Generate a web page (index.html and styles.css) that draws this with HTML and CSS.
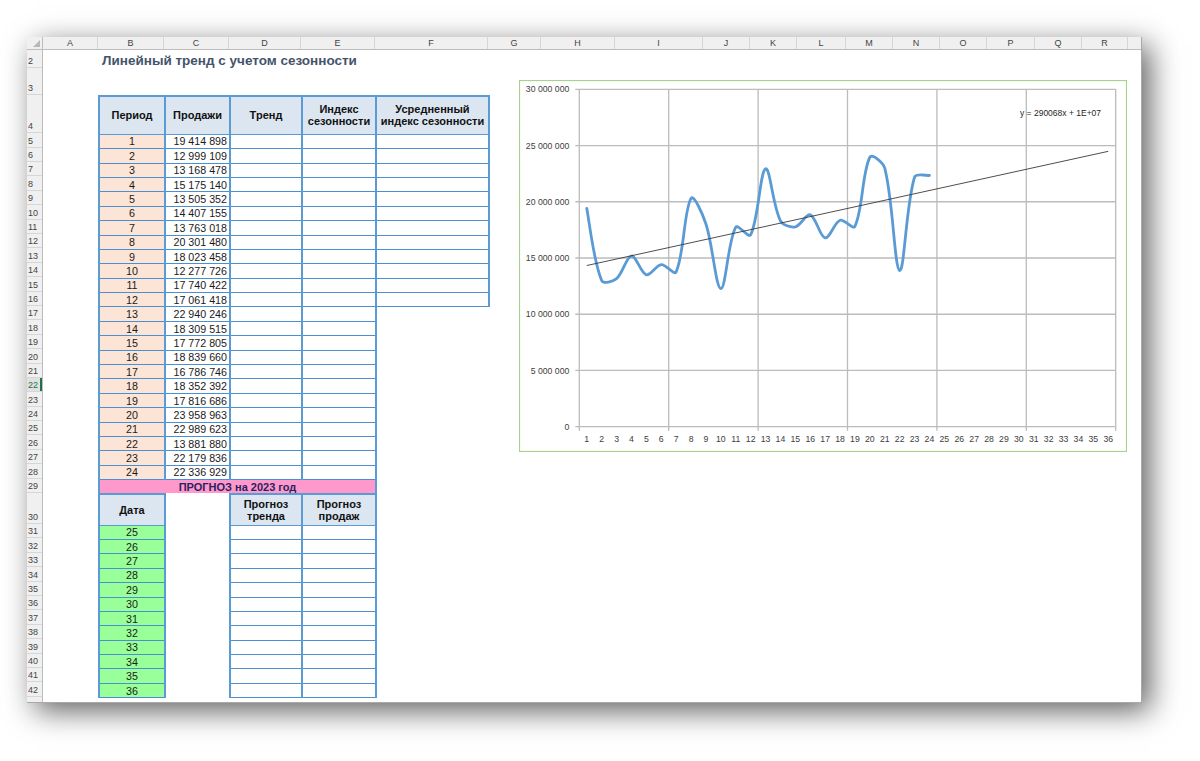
FILE: index.html
```html
<!DOCTYPE html>
<html lang="ru">
<head>
<meta charset="utf-8">
<title>Линейный тренд с учетом сезонности</title>
<link rel="stylesheet" href="styles.css">
</head>
<body>
<div class="sheet">
  <div class="corner"><span class="tri"></span></div>
  <div class="colheads">
    <div class="ch wa">A</div><div class="ch wb">B</div><div class="ch wc">C</div><div class="ch wd">D</div><div class="ch we">E</div><div class="ch wf">F</div><div class="ch wg">G</div><div class="ch wh">H</div><div class="ch wi">I</div><div class="ch wj">J</div><div class="ch wk">K</div><div class="ch wl">L</div><div class="ch wm">M</div><div class="ch wn">N</div><div class="ch wo">O</div><div class="ch wp">P</div><div class="ch wq">Q</div><div class="ch wr">R</div><div class="ch wrest"></div>
  </div>
  <div class="rowheads">
    <div class="rh h2">2</div><div class="rh h3">3</div><div class="rh h4">4</div>
    <div class="rh">5</div><div class="rh">6</div><div class="rh">7</div><div class="rh">8</div><div class="rh">9</div><div class="rh">10</div><div class="rh">11</div><div class="rh">12</div><div class="rh">13</div><div class="rh">14</div><div class="rh">15</div><div class="rh">16</div><div class="rh">17</div><div class="rh">18</div><div class="rh">19</div><div class="rh">20</div><div class="rh">21</div><div class="rh act">22</div><div class="rh">23</div><div class="rh">24</div><div class="rh">25</div><div class="rh">26</div><div class="rh">27</div><div class="rh">28</div><div class="rh">29</div>
    <div class="rh h30">30</div>
    <div class="rh">31</div><div class="rh">32</div><div class="rh">33</div><div class="rh">34</div><div class="rh">35</div><div class="rh">36</div><div class="rh">37</div><div class="rh">38</div><div class="rh">39</div><div class="rh">40</div><div class="rh">41</div><div class="rh">42</div>
    <div class="rh h43"></div>
  </div>

  <div class="title">Линейный тренд с учетом сезонности</div>

  <table class="data">
    <colgroup><col class="cb"><col class="cc"><col class="cd"><col class="ce"><col class="cf"></colgroup>
    <tr class="hrow"><th class="hd">Период</th><th class="hd">Продажи</th><th class="hd">Тренд</th><th class="hd">Индекс<br>сезонности</th><th class="hd">Усредненный<br>индекс сезонности</th></tr>
    <tr class="r"><td class="bx per">1</td><td class="bx val">19 414 898</td><td class="bx"></td><td class="bx"></td><td class="bx"></td></tr>
    <tr class="r"><td class="bx per">2</td><td class="bx val">12 999 109</td><td class="bx"></td><td class="bx"></td><td class="bx"></td></tr>
    <tr class="r"><td class="bx per">3</td><td class="bx val">13 168 478</td><td class="bx"></td><td class="bx"></td><td class="bx"></td></tr>
    <tr class="r"><td class="bx per">4</td><td class="bx val">15 175 140</td><td class="bx"></td><td class="bx"></td><td class="bx"></td></tr>
    <tr class="r"><td class="bx per">5</td><td class="bx val">13 505 352</td><td class="bx"></td><td class="bx"></td><td class="bx"></td></tr>
    <tr class="r"><td class="bx per">6</td><td class="bx val">14 407 155</td><td class="bx"></td><td class="bx"></td><td class="bx"></td></tr>
    <tr class="r"><td class="bx per">7</td><td class="bx val">13 763 018</td><td class="bx"></td><td class="bx"></td><td class="bx"></td></tr>
    <tr class="r"><td class="bx per">8</td><td class="bx val">20 301 480</td><td class="bx"></td><td class="bx"></td><td class="bx"></td></tr>
    <tr class="r"><td class="bx per">9</td><td class="bx val">18 023 458</td><td class="bx"></td><td class="bx"></td><td class="bx"></td></tr>
    <tr class="r"><td class="bx per">10</td><td class="bx val">12 277 726</td><td class="bx"></td><td class="bx"></td><td class="bx"></td></tr>
    <tr class="r"><td class="bx per">11</td><td class="bx val">17 740 422</td><td class="bx"></td><td class="bx"></td><td class="bx"></td></tr>
    <tr class="r"><td class="bx per">12</td><td class="bx val">17 061 418</td><td class="bx"></td><td class="bx"></td><td class="bx"></td></tr>
    <tr class="r"><td class="bx per">13</td><td class="bx val">22 940 246</td><td class="bx"></td><td class="bx"></td><td class="nb"></td></tr>
    <tr class="r"><td class="bx per">14</td><td class="bx val">18 309 515</td><td class="bx"></td><td class="bx"></td><td class="nb"></td></tr>
    <tr class="r"><td class="bx per">15</td><td class="bx val">17 772 805</td><td class="bx"></td><td class="bx"></td><td class="nb"></td></tr>
    <tr class="r"><td class="bx per">16</td><td class="bx val">18 839 660</td><td class="bx"></td><td class="bx"></td><td class="nb"></td></tr>
    <tr class="r"><td class="bx per">17</td><td class="bx val">16 786 746</td><td class="bx"></td><td class="bx"></td><td class="nb"></td></tr>
    <tr class="r"><td class="bx per">18</td><td class="bx val">18 352 392</td><td class="bx"></td><td class="bx"></td><td class="nb"></td></tr>
    <tr class="r"><td class="bx per">19</td><td class="bx val">17 816 686</td><td class="bx"></td><td class="bx"></td><td class="nb"></td></tr>
    <tr class="r"><td class="bx per">20</td><td class="bx val">23 958 963</td><td class="bx"></td><td class="bx"></td><td class="nb"></td></tr>
    <tr class="r"><td class="bx per">21</td><td class="bx val">22 989 623</td><td class="bx"></td><td class="bx"></td><td class="nb"></td></tr>
    <tr class="r"><td class="bx per">22</td><td class="bx val">13 881 880</td><td class="bx"></td><td class="bx"></td><td class="nb"></td></tr>
    <tr class="r"><td class="bx per">23</td><td class="bx val">22 179 836</td><td class="bx"></td><td class="bx"></td><td class="nb"></td></tr>
    <tr class="r"><td class="bx per">24</td><td class="bx val">22 336 929</td><td class="bx"></td><td class="bx"></td><td class="nb"></td></tr>
    <tr class="r"><td class="pink" colspan="4">ПРОГНОЗ на 2023 год</td><td class="nb"></td></tr>
    <tr class="r30"><th class="hd">Дата</th><td class="nb"></td><th class="hd">Прогноз<br>тренда</th><th class="hd">Прогноз<br>продаж</th><td class="nb"></td></tr>
    <tr class="r"><td class="bx grn">25</td><td class="nb"></td><td class="bx"></td><td class="bx"></td><td class="nb"></td></tr>
    <tr class="r"><td class="bx grn">26</td><td class="nb"></td><td class="bx"></td><td class="bx"></td><td class="nb"></td></tr>
    <tr class="r"><td class="bx grn">27</td><td class="nb"></td><td class="bx"></td><td class="bx"></td><td class="nb"></td></tr>
    <tr class="r"><td class="bx grn">28</td><td class="nb"></td><td class="bx"></td><td class="bx"></td><td class="nb"></td></tr>
    <tr class="r"><td class="bx grn">29</td><td class="nb"></td><td class="bx"></td><td class="bx"></td><td class="nb"></td></tr>
    <tr class="r"><td class="bx grn">30</td><td class="nb"></td><td class="bx"></td><td class="bx"></td><td class="nb"></td></tr>
    <tr class="r"><td class="bx grn">31</td><td class="nb"></td><td class="bx"></td><td class="bx"></td><td class="nb"></td></tr>
    <tr class="r"><td class="bx grn">32</td><td class="nb"></td><td class="bx"></td><td class="bx"></td><td class="nb"></td></tr>
    <tr class="r"><td class="bx grn">33</td><td class="nb"></td><td class="bx"></td><td class="bx"></td><td class="nb"></td></tr>
    <tr class="r"><td class="bx grn">34</td><td class="nb"></td><td class="bx"></td><td class="bx"></td><td class="nb"></td></tr>
    <tr class="r"><td class="bx grn">35</td><td class="nb"></td><td class="bx"></td><td class="bx"></td><td class="nb"></td></tr>
    <tr class="r"><td class="bx grn">36</td><td class="nb"></td><td class="bx"></td><td class="bx"></td><td class="nb"></td></tr>
  </table>

  <div class="chart">
    <svg class="plot" width="608" height="372" viewBox="0 0 608 372">
      <rect class="frame" x="0.5" y="0.5" width="607" height="371"/>
      <path class="grid" d="M60.3,9.3H596.7M60.3,65.53H596.7M60.3,121.77H596.7M60.3,178H596.7M60.3,234.23H596.7M60.3,290.47H596.7M60.3,346.7H596.7M60.3,9.3V346.7M149.7,9.3V346.7M239.1,9.3V346.7M328.5,9.3V346.7M417.9,9.3V346.7M507.3,9.3V346.7M596.7,9.3V346.7"/>
      <path class="grid" d="M56.3,9.3H60.3M56.3,65.53H60.3M56.3,121.77H60.3M56.3,178H60.3M56.3,234.23H60.3M56.3,290.47H60.3M56.3,346.7H60.3M60.3,346.7V350.7M149.7,346.7V350.7M239.1,346.7V350.7M328.5,346.7V350.7M417.9,346.7V350.7M507.3,346.7V350.7M596.7,346.7V350.7"/>
      <g class="ylab">
        <text x="50.3" y="12.4">30 000 000</text>
        <text x="50.3" y="68.6">25 000 000</text>
        <text x="50.3" y="124.9">20 000 000</text>
        <text x="50.3" y="181.1">15 000 000</text>
        <text x="50.3" y="237.3">10 000 000</text>
        <text x="50.3" y="293.6">5 000 000</text>
        <text x="50.3" y="349.8">0</text>
      </g>
      <g class="xlab">
        <text x="67.75" y="362.4">1</text><text x="82.65" y="362.4">2</text><text x="97.55" y="362.4">3</text><text x="112.45" y="362.4">4</text><text x="127.35" y="362.4">5</text><text x="142.25" y="362.4">6</text><text x="157.15" y="362.4">7</text><text x="172.05" y="362.4">8</text><text x="186.95" y="362.4">9</text><text x="201.85" y="362.4">10</text><text x="216.75" y="362.4">11</text><text x="231.65" y="362.4">12</text><text x="246.55" y="362.4">13</text><text x="261.45" y="362.4">14</text><text x="276.35" y="362.4">15</text><text x="291.25" y="362.4">16</text><text x="306.15" y="362.4">17</text><text x="321.05" y="362.4">18</text><text x="335.95" y="362.4">19</text><text x="350.85" y="362.4">20</text><text x="365.75" y="362.4">21</text><text x="380.65" y="362.4">22</text><text x="395.55" y="362.4">23</text><text x="410.45" y="362.4">24</text><text x="425.35" y="362.4">25</text><text x="440.25" y="362.4">26</text><text x="455.15" y="362.4">27</text><text x="470.05" y="362.4">28</text><text x="484.95" y="362.4">29</text><text x="499.85" y="362.4">30</text><text x="514.75" y="362.4">31</text><text x="529.65" y="362.4">32</text><text x="544.55" y="362.4">33</text><text x="559.45" y="362.4">34</text><text x="574.35" y="362.4">35</text><text x="589.25" y="362.4">36</text>
      </g>
      <path class="series" d="M67.75,128.35 C70.23,140.38 74.4,181.05 82.65,200.5 C84.33,204.47 94,201.51 97.55,198.6 C103.94,193.36 107.18,176.7 112.45,176.03 C117.12,175.44 121.68,193.17 127.35,194.81 C131.61,196.05 137.08,185.17 142.25,184.67 C147.01,184.21 155.35,195.91 157.15,191.91 C165.29,173.81 164.93,129.83 172.05,118.38 C174.86,113.86 183.88,134.71 186.95,144 C193.82,164.79 196.76,208.08 201.85,208.62 C206.7,209.14 208.9,161.36 216.75,147.18 C218.83,143.43 229.68,158.68 231.65,154.82 C239.62,139.19 241.03,91.3 246.55,88.7 C250.96,86.62 253.79,125.84 261.45,140.78 C263.72,145.21 271.81,147.73 276.35,146.82 C281.75,145.74 287.17,133.3 291.25,134.82 C297.11,137 300.75,156.92 306.15,157.91 C310.68,158.74 315.2,142.58 321.05,140.3 C325.13,138.71 334.11,150.22 335.95,146.32 C344.04,129.2 342.97,92.62 350.85,77.24 C352.91,73.22 364.25,82.42 365.75,88.14 C374.18,120.2 375.46,188.98 380.65,190.57 C385.39,192.02 386.98,124.61 395.55,97.25 C396.91,92.91 407.97,95.78 410.45,95.48"/>
      <line class="trend" x1="67.75" y1="185.53" x2="589.25" y2="71.34"/>
      <text class="eq" x="501" y="35.8">y = 290068x + 1E+07</text>
    </svg>
  </div>
</div>
</body>
</html>
```

FILE: styles.css
```css
html, body {
  margin: 0;
  padding: 0;
  background: #ffffff;
}

body {
  width: 1200px;
  height: 761px;
  overflow: hidden;
  font-family: "Liberation Sans", Arial, sans-serif;
}

.sheet {
  position: relative;
  box-sizing: border-box;
  margin: 37px 0 0 27px;
  width: 1115px;
  height: 666px;
  background: #ffffff;
  border-right: 1px solid #a9a9a9;
  border-bottom: 1px solid #a9a9a9;
  box-shadow: 8px 8px 28px rgba(0, 0, 0, 0.62);
  display: grid;
  grid-template-columns: 16px 55px 66px 65px 72px 74px 113px 1fr;
  grid-template-rows: 13px 17.7px 27.3px 1fr;
  overflow: hidden;
}

/* ---------- headers ---------- */
.corner {
  grid-row: 1;
  grid-column: 1;
  background: #f0f0f0;
  box-sizing: border-box;
  border-right: 1px solid #bdbdbd;
  border-bottom: 1px solid #bdbdbd;
  display: flex;
  align-items: flex-end;
  justify-content: flex-end;
}

.tri {
  width: 0;
  height: 0;
  border-left: 7px solid transparent;
  border-bottom: 7px solid #b8b8b8;
  margin: 0 2px 2px 0;
}

.colheads {
  grid-row: 1;
  grid-column: 2 / -1;
  display: flex;
  background: #f0f0f0;
  border-bottom: 1px solid #bdbdbd;
  box-sizing: border-box;
}

.ch {
  flex: none;
  box-sizing: border-box;
  border-right: 1px solid #d6d6d6;
  font-size: 9px;
  line-height: 12px;
  color: #444444;
  text-align: center;
}

.wa { width: 55px; }
.wb { width: 66px; }
.wc { width: 65px; }
.wd { width: 72px; }
.we { width: 74px; }
.wf { width: 113px; }
.wg { width: 53px; }
.wh { width: 74px; }
.wi { width: 88px; }
.wj { width: 47px; }
.wk { width: 47px; }
.wl { width: 49px; }
.wm { width: 47px; }
.wn { width: 47px; }
.wo { width: 47px; }
.wp { width: 48px; }
.wq { width: 47px; }
.wr { width: 46px; }
.wrest { flex: 1; border-right: none; }

.rowheads {
  grid-row: 2 / -1;
  grid-column: 1;
  display: flex;
  flex-direction: column;
  background: #f0f0f0;
  border-right: 1px solid #bdbdbd;
  box-sizing: border-box;
}

.rh {
  flex: none;
  height: 14.4px;
  box-sizing: border-box;
  border-bottom: 1px solid #d6d6d6;
  display: flex;
  align-items: flex-end;
  padding-left: 1px;
  font-size: 9px;
  line-height: 12px;
  color: #444444;
  overflow: hidden;
}

.h2 { height: 17.7px; }
.h3 { height: 27.3px; }
.h4 { height: 38.3px; }
.h30 { height: 31px; }
.h43 { flex: 1; border-bottom: none; }

.act {
  color: #217346;
  background: #e1e1e1;
  box-shadow: inset -2px 0 0 #217346;
}

/* ---------- title ---------- */
.title {
  grid-row: 2;
  grid-column: 3 / -1;
  align-self: start;
  margin-top: 3px;
  padding-left: 4px;
  font-size: 13.5px;
  line-height: 16px;
  font-weight: bold;
  color: #44546a;
  white-space: nowrap;
}

/* ---------- data table ---------- */
.data {
  grid-row: 4;
  grid-column: 3 / 8;
  align-self: start;
  width: 390px;
  table-layout: fixed;
  border-collapse: collapse;
  font-size: 10.7px;
  color: #1a1a1a;
}

.cb { width: 66px; }
.cc { width: 65px; }
.cd { width: 72px; }
.ce { width: 74px; }
.cf { width: 113px; }

.hrow { height: 38.3px; }
.r { height: 14.4px; }
.r30 { height: 31px; }

.data td,
.data th {
  padding: 0 2px;
  line-height: 12px;
  white-space: nowrap;
  overflow: hidden;
  vertical-align: middle;
}

.bx {
  border-top: 1px solid #4a8fd0;
  border-bottom: 1px solid #4a8fd0;
  border-left: 2px solid #5b9bd5;
  border-right: 2px solid #5b9bd5;
}

.hd {
  background: #dce6f1;
  border: 2px solid #5b9bd5;
  border-bottom-width: 1px;
  font-size: 11px;
  font-weight: bold;
  line-height: 15px;
  text-align: center;
  color: #111111;
}

.per {
  background: #fce4d6;
  text-align: center;
}

.val {
  text-align: right;
}

.grn {
  background: #99ff99;
  text-align: center;
}

.pink {
  background: #ff99cc;
  border-left: 2px solid #5b9bd5;
  border-right: 2px solid #5b9bd5;
  font-size: 11px;
  font-weight: bold;
  text-align: center;
  color: #27235e;
}

.nb {
  border: none;
}

/* ---------- chart ---------- */
.chart {
  position: absolute;
  left: 492px;
  top: 43px;
  width: 608px;
  height: 372px;
  background: #ffffff;
}

.plot {
  display: block;
}

.frame {
  fill: #ffffff;
  stroke: #a9d18e;
  stroke-width: 1.2;
}

.grid {
  fill: none;
  stroke: #bcbcbc;
  stroke-width: 1.3;
}

.ylab text,
.xlab text,
.eq {
  font-family: "Liberation Sans", Arial, sans-serif;
  font-size: 8.7px;
  fill: #404040;
}

.ylab text { text-anchor: end; }
.xlab text { text-anchor: middle; }
.eq { font-size: 8.5px; fill: #262626; }

.series {
  fill: none;
  stroke: #5b9bd5;
  stroke-width: 2.8;
  stroke-linecap: round;
  stroke-linejoin: round;
}

.trend {
  stroke: #3a3a3a;
  stroke-width: 0.9;
}
```
